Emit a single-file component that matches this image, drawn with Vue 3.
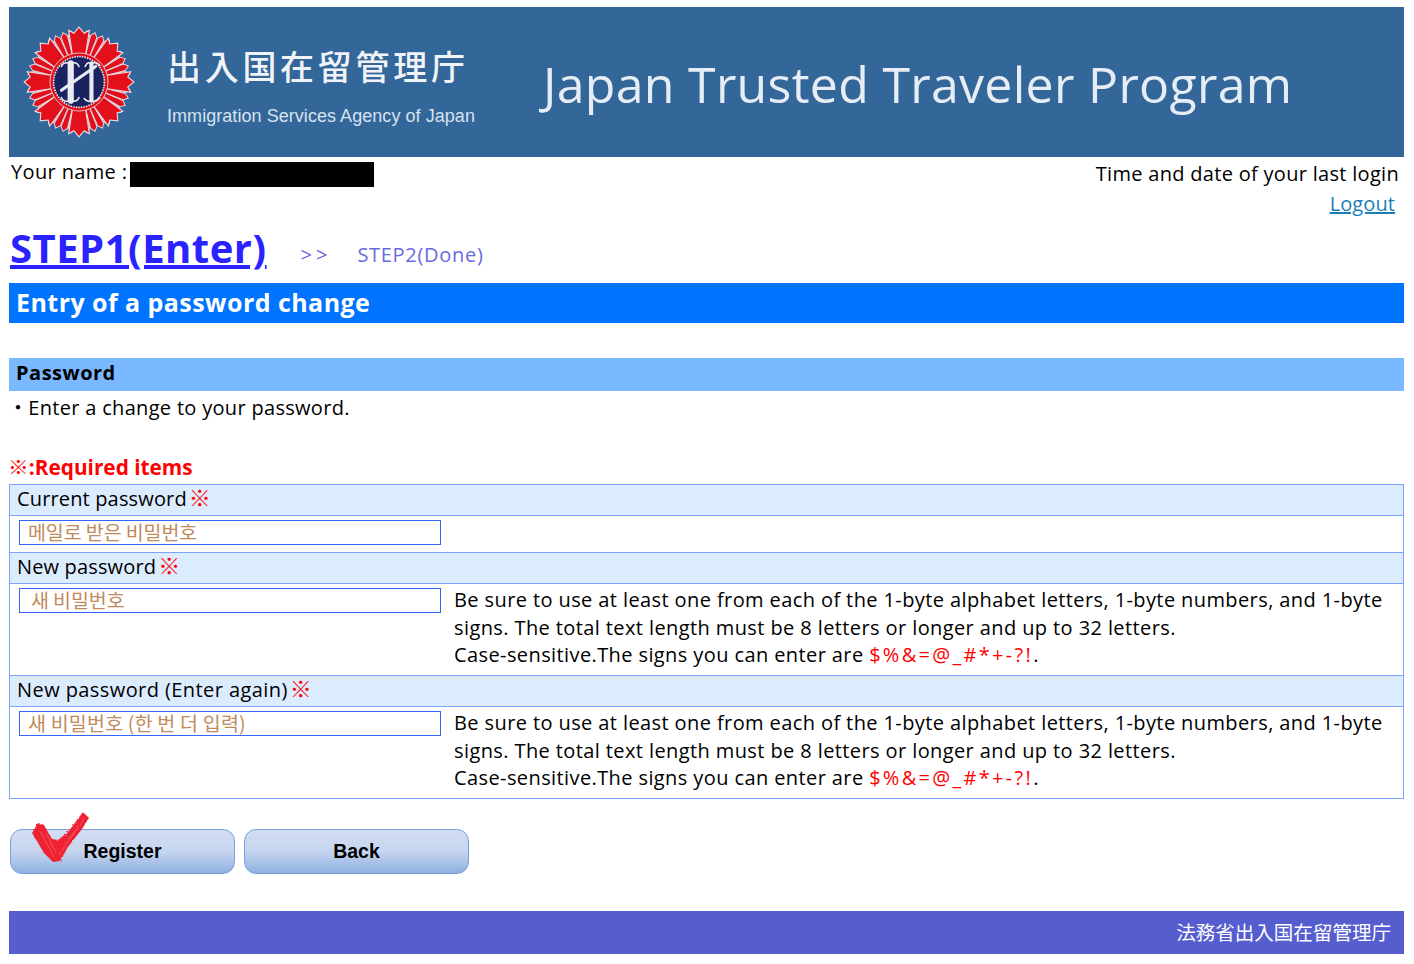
<template>
  <div class="page">
    <header class="banner">
      <svg class="emblem" width="114" height="114" viewBox="-55 -55 110 110">
        <g v-for="a in thinRays" :key="'t' + a" :transform="`rotate(${a})`">
          <path d="M-1.8 -24 L-3.2 -46 L0 -50 L3.2 -46 L1.8 -24 Z" fill="#e3101c" stroke="#e9dfe6" stroke-width="0.9" />
        </g>
        <g v-for="a in wideRays" :key="'w' + a" :transform="`rotate(${a})`">
          <path d="M-6 -24 L-10 -50 L-5 -47 L0 -53 L5 -47 L10 -50 L6 -24 Z" fill="#e3101c" stroke="#e9dfe6" stroke-width="1" />
        </g>
        <circle r="28" fill="#e3101c" stroke="#e9dfe6" stroke-width="0.8" />
        <circle r="24.5" fill="#1a2260" stroke="#e6e6ee" stroke-width="1.6" stroke-dasharray="1.5 1" />
        <g fill="none" stroke="#e9ebf2" stroke-linecap="round">
          <path d="M-8 -18 L-8 18" stroke-width="6" />
          <path d="M12 -18 L12 18" stroke-width="4" />
          <path d="M-17 8 L16 -15" stroke-width="3" />
          <path d="M-17 -15 Q-15 -20 -8 -18 Q-2 -20 0 -15 M6 -15 Q8 -20 12 -18 Q17 -20 20 -16 M-17 15 Q-15 20 -8 18 Q-2 20 0 15 M5 16 Q8 20 12 18 Q17 20 20 15" stroke-width="1.6" />
        </g>
      </svg>
      <div class="agency">
        <div class="agency-ja">出入国在留管理庁</div>
        <div class="agency-en">Immigration Services Agency of Japan</div>
      </div>
      <div class="program">Japan Trusted Traveler Program</div>
    </header>

    <div class="user-bar">
      <div class="user-name">
        <span class="user-label">Your name :</span>
        <span class="redacted"></span>
      </div>
      <div class="user-right">
        <div>Time and date of your last login</div>
        <a class="logout" href="#">Logout</a>
      </div>
    </div>

    <div class="steps">
      <a class="step-current" href="#">STEP1(Enter)</a>
      <span class="step-sep">&gt;&gt;</span>
      <span class="step-next">STEP2(Done)</span>
    </div>

    <h1 class="title">Entry of a password change</h1>
    <h2 class="subtitle">Password</h2>
    <p class="hint">・Enter a change to your password.</p>
    <p class="required">※:Required items</p>

    <div class="form-table">
      <template v-for="row in rows" :key="row.label">
        <div class="row-head" :class="row.headCls">{{ row.label }}<span class="mark">※</span></div>
        <div class="row-body" :class="{ 'has-note': row.note }">
          <input class="field" :class="row.cls" type="text" :value="row.value" />
          <div v-if="row.note" class="note">
            Be sure to use at least one from each of the 1-byte alphabet letters, 1-byte numbers, and 1-byte<br />
            signs. The total text length must be 8 letters or longer and up to 32 letters.<br />
            Case-sensitive.The signs you can enter are <span class="signs">$%&amp;=@_#*+-?!</span>.
          </div>
        </div>
      </template>
    </div>

    <div class="buttons">
      <button class="btn" type="button">
        <svg class="check" width="60" height="54" viewBox="0 0 60 54">
          <defs>
            <filter id="brush" x="-10%" y="-10%" width="120%" height="120%">
              <feTurbulence type="fractalNoise" baseFrequency="0.45" numOctaves="2" seed="4" />
              <feDisplacementMap in="SourceGraphic" scale="3" />
              <feGaussianBlur stdDeviation="0.5" />
            </filter>
          </defs>
          <g filter="url(#brush)">
            <path d="M0 22 L6 12 L12 14 L20 28 L26 29 L36 21 L51 1 L57 7 L50 18 L36 36 L28 50 L21 51 L12 42 L6 32 Z" fill="#ee2430" />
            <path d="M8 20 L22 46 M27 44 L52 8 M14 22 L24 42 M33 32 L50 12" stroke="#f2606a" stroke-width="0.8" fill="none" />
          </g>
        </svg>
        Register
      </button>
      <button class="btn" type="button">Back</button>
    </div>

    <footer class="footer">法務省出入国在留管理庁</footer>
  </div>
</template>

<script setup>
const wideRays = [0, 45, 90, 135, 180, 225, 270, 315]
const thinRays = []
for (let a = 0; a < 360; a += 9) {
  if (a % 45 !== 0) thinRays.push(a)
}

const rows = [
  { label: 'Current password', value: '메일로 받은 비밀번호', cls: 'tight', headCls: '', note: false },
  { label: 'New password', value: '새 비밀번호', cls: 'tight indent', headCls: '', note: true },
  { label: 'New password (Enter again)', value: '새 비밀번호 (한 번 더 입력)', cls: '', headCls: 'wide', note: true }
]
</script>

<style>
html, body {
  margin: 0;
  background: #fff;
}
</style>

<style scoped>
.page {
  padding: 7px 10px 10px 9px;
  font-family: "Open Sans", "Noto Sans CJK JP", sans-serif;
  font-size: 20px;
  letter-spacing: 0.3px;
  color: #000;
}

.banner {
  height: 150px;
  background: #336699;
  display: flex;
  align-items: center;
  color: #e6edf4;
}

.emblem {
  flex: none;
  margin-left: 13px;
  filter: blur(0.4px);
}

.agency {
  margin-left: 31px;
  width: 375px;
  flex: none;
  padding-top: 8px;
}

.agency-ja {
  font-family: "Noto Sans CJK JP", sans-serif;
  font-size: 34px;
  font-weight: 500;
  letter-spacing: 3.7px;
  line-height: 44px;
  color: #f0f3f7;
}

.agency-en {
  font-family: "Liberation Sans", sans-serif;
  font-size: 18px;
  line-height: 24px;
  margin-top: 16px;
  letter-spacing: 0.05px;
  color: #d6e2ee;
}

.program {
  font-family: "Open Sans", sans-serif;
  font-size: 50px;
  letter-spacing: 0.3px;
  white-space: nowrap;
  color: #e6edf4;
  padding-top: 4px;
  margin-left: 1px;
}

.user-bar {
  display: flex;
  justify-content: space-between;
  padding: 3px 5px 0 2px;
  line-height: 28px;
  height: 70px;
  box-sizing: border-box;
}

.user-name {
  display: flex;
  gap: 3px;
}

.user-label {
  margin-top: -2px;
  letter-spacing: 0.36px;
}

.redacted {
  width: 244px;
  height: 25px;
  margin-top: 2px;
  background: #000;
}

.user-right {
  text-align: right;
}

.logout {
  color: #1a7fb5;
  display: block;
  padding-right: 4px;
  margin-top: 2px;
  letter-spacing: 0.1px;
}

.steps {
  height: 56px;
  display: flex;
  align-items: baseline;
  padding-left: 1px;
}

.step-current {
  color: #2a22ff;
  font-size: 40px;
  font-weight: 700;
  letter-spacing: 0.5px;
  line-height: 41px;
}

.step-sep {
  margin-left: 34px;
  color: #6a62e0;
  letter-spacing: 4px;
  position: relative;
  top: -1px;
}

.step-next {
  margin-left: 26px;
  color: #6a6ae0;
  letter-spacing: 0.7px;
  position: relative;
  top: -1px;
}

.title {
  margin: 0;
  height: 40px;
  line-height: 38px;
  padding-left: 7px;
  background: #0073ff;
  color: #fff;
  font-size: 25px;
  font-weight: 700;
  letter-spacing: 0.45px;
}

.subtitle {
  margin: 35px 0 0;
  height: 33px;
  line-height: 29px;
  padding-left: 7px;
  background: #7ab8ff;
  font-size: 20px;
  font-weight: 700;
  letter-spacing: 0.5px;
}

.hint {
  margin: 0 0 0 -2px;
  height: 60px;
  line-height: 34px;
  padding-left: 1px;
  letter-spacing: 0.31px;
}

.required {
  margin: 0 0 0 -2px;
  height: 33px;
  line-height: 32px;
  padding-left: 1px;
  color: #ff0000;
  font-weight: 700;
  font-size: 20.8px;
  letter-spacing: 0;
}

.form-table {
  border: 1px solid #7da2ff;
}

.row-head {
  height: 30px;
  line-height: 28px;
  padding-left: 7px;
  background: #dcecff;
  border-bottom: 1px solid #7da2ff;
  letter-spacing: 0.15px;
}

.row-head.wide {
  letter-spacing: 0.42px;
}

.row-body {
  display: flex;
  align-items: flex-start;
  padding: 4px 0 7px 9px;
  height: 37px;
  box-sizing: border-box;
  border-bottom: 1px solid #7da2ff;
}

.row-body.has-note {
  height: 92px;
}

.row-body:last-child {
  border-bottom: 0;
  height: 91px;
}

.field {
  width: 422px;
  height: 25px;
  box-sizing: border-box;
  flex: none;
  padding: 0 0 2px 8px;
  border: 1px solid #3366ff;
  border-radius: 0;
  outline: none;
  background: #fff;
  color: #c08a5a;
  font-family: "Noto Sans CJK KR", sans-serif;
  font-size: 19.5px;
  letter-spacing: 0.2px;
}

.field.tight {
  letter-spacing: -0.1px;
}

.field.indent {
  padding-left: 11px;
}

.note {
  margin-left: 13px;
  line-height: 27.5px;
  white-space: nowrap;
  margin-top: -2px;
  letter-spacing: 0.4px;
}

.mark {
  margin-left: 2px;
  color: #ff0000;
  font-size: 22px;
  line-height: 20px;
  letter-spacing: 0;
}

.signs {
  color: #ff0000;
  letter-spacing: 2.3px;
}

.buttons {
  display: flex;
  gap: 9px;
  margin-top: 30px;
  padding-left: 1px;
}

.btn {
  position: relative;
  width: 225px;
  height: 45px;
  padding: 0;
  border: 1px solid #7aa0dc;
  border-radius: 12px;
  background: linear-gradient(#d2ddf2 0%, #c6d5ef 50%, #8fb0e2 100%);
  font-family: "Liberation Sans", sans-serif;
  font-size: 19.5px;
  font-weight: 700;
  letter-spacing: 0;
  color: #000;
}

.check {
  position: absolute;
  left: 21px;
  top: -19px;
}

.footer {
  margin-top: 37px;
  height: 43px;
  line-height: 41px;
  padding-right: 13px;
  background: #555dcf;
  color: #fff;
  text-align: right;
  font-family: "Noto Sans CJK JP", sans-serif;
  font-size: 19.55px;
  letter-spacing: 0;
}
</style>
